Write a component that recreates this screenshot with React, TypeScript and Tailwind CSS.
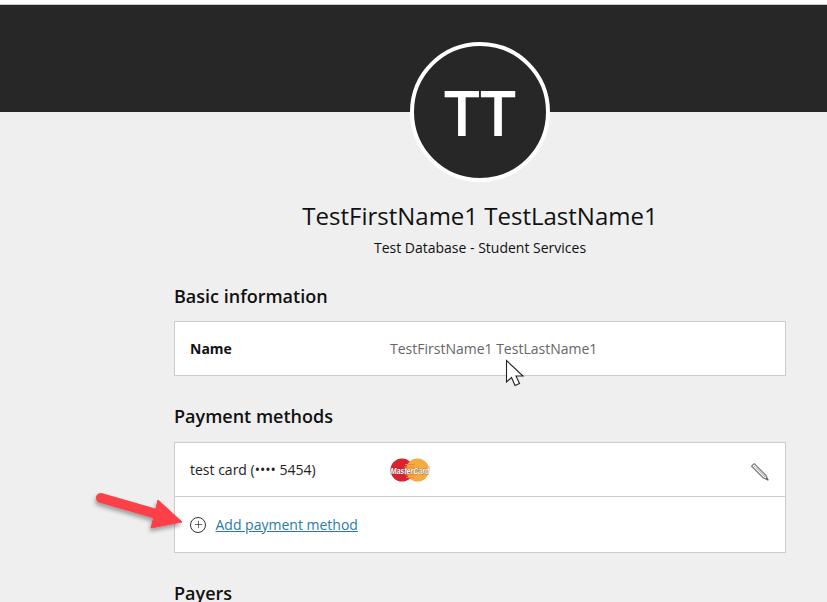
import { Plus } from 'lucide-react';

function MasterCardLogo() {
  return (
    <svg width="40" height="24" viewBox="0 0 40 24">
      <circle cx="12" cy="12" r="11.5" fill="#d9222f" />
      <circle cx="27.5" cy="12" r="11.5" fill="#f4ac3f" />
      <path d="M15 6.5h10M14 9h11M15 17h10M16 19.5h8" stroke="#f08a32" strokeWidth="1.2" />
      <g transform="scale(0.72 1)">
        <text
          x="27.7"
          y="16"
          textAnchor="middle"
          fill="#fff"
          stroke="#5b3030"
          strokeWidth="0.6"
          paintOrder="stroke"
          fontSize="9.8"
          fontStyle="italic"
          fontWeight="700"
          fontFamily="Liberation Sans, sans-serif"
        >
          MasterCard
        </text>
      </g>
    </svg>
  );
}

function PencilIcon() {
  return (
    <svg className="ml-auto" width="20" height="20" viewBox="0 0 20 20" fill="none">
      <path
        d="M4.2 1.6 L1.6 4.2 L13.2 15.8 L18 18 L15.8 13.2 Z"
        fill="#fff"
        stroke="#808080"
        strokeWidth="1.3"
        strokeLinejoin="round"
      />
      <path d="M3.4 5.6 L5.8 3.2 M5.6 5.2 L15 14.6 M13.4 15.8 L15.8 13.4" stroke="#9a9a9a" />
      <path d="M16 16 L18 18" stroke="#666" strokeWidth="1.6" />
    </svg>
  );
}

function RedArrow() {
  return (
    <svg
      className="absolute top-[487px] left-[90px] overflow-visible"
      width="96"
      height="46"
      viewBox="0 0 96 46"
    >
      <defs>
        <filter id="arrow-shadow" x="-20%" y="-30%" width="140%" height="170%">
          <feDropShadow dx="-1" dy="3" stdDeviation="2" floodColor="#000" floodOpacity="0.35" />
        </filter>
      </defs>
      <g filter="url(#arrow-shadow)">
        <path
          d="M11 11 L70 28"
          stroke="#fb4147"
          strokeWidth="10"
          strokeLinecap="round"
          fill="none"
        />
        <path d="M68 13 L92 35 L61 41 Z" fill="#fb4147" stroke="#fb4147" strokeLinejoin="round" />
      </g>
    </svg>
  );
}

function MouseCursor() {
  return (
    <svg
      className="absolute top-[359px] left-[505px]"
      width="21"
      height="28"
      viewBox="0 0 21 28"
    >
      <path
        d="M1.5 1.5 L1.5 23 L6.5 18.5 L10 26.5 L14.5 24.5 L11 17 L18 17 Z"
        fill="#fff"
        stroke="#222"
        strokeWidth="1.1"
        strokeLinejoin="miter"
      />
    </svg>
  );
}

export default function App() {
  return (
    <div className="relative h-[602px] w-[827px] overflow-hidden bg-[#efefef] font-['Open_Sans',sans-serif]">
      <div className="h-[4px] bg-white" />
      <div className="h-[108px] border-t border-[#c9c9c9] bg-[#272727]" />

      <div className="-mt-[70px] ml-[174px] w-[612px]">
        <div className="mx-auto flex h-[140px] w-[140px] items-center justify-center rounded-full border-4 border-white bg-[#272727] text-[64px] leading-none font-semibold text-white">
          TT
        </div>

        <h1 className="mt-[19px] text-center text-[24px] leading-[30px] font-normal text-[#111]">
          TestFirstName1 TestLastName1
        </h1>
        <p className="mt-[7px] text-center text-sm leading-[20px] text-[#111]">
          Test Database - Student Services
        </p>

        <h2 className="mt-[25px] text-[18px] leading-[26px] font-semibold text-[#111]">
          Basic information
        </h2>
        <div className="mt-[12px] flex h-[55px] items-center border border-[#cccccc] bg-white px-[15px] text-sm">
          <span className="w-[200px] font-bold text-[#111]">Name</span>
          <span className="text-[#666]">TestFirstName1 TestLastName1</span>
        </div>

        <h2 className="mt-[27px] text-[18px] leading-[26px] font-semibold text-[#111]">
          Payment methods
        </h2>
        <div className="mt-[13px] border border-[#cccccc] bg-white text-sm">
          <div className="flex h-[54px] items-center border-b border-[#cccccc] pr-[15px] pl-[15px]">
            <span className="w-[200px] text-[#222]">test card (•••• 5454)</span>
            <MasterCardLogo />
            <span className="ml-auto pt-[4px]">
              <PencilIcon />
            </span>
          </div>
          <div className="flex h-[55px] items-center gap-[9.5px] pl-[15px]">
            <span className="flex h-[16px] w-[16px] items-center justify-center rounded-full border border-[#333]">
              <Plus className="h-[11px] w-[11px] text-[#333]" strokeWidth={1.6} />
            </span>
            <a href="#" className="text-[#2a7aa8] underline">
              Add payment method
            </a>
          </div>
        </div>

        <h2 className="mt-[27px] text-[18px] leading-[26px] font-semibold text-[#111]">Payers</h2>
      </div>

      <RedArrow />
      <MouseCursor />
    </div>
  );
}
